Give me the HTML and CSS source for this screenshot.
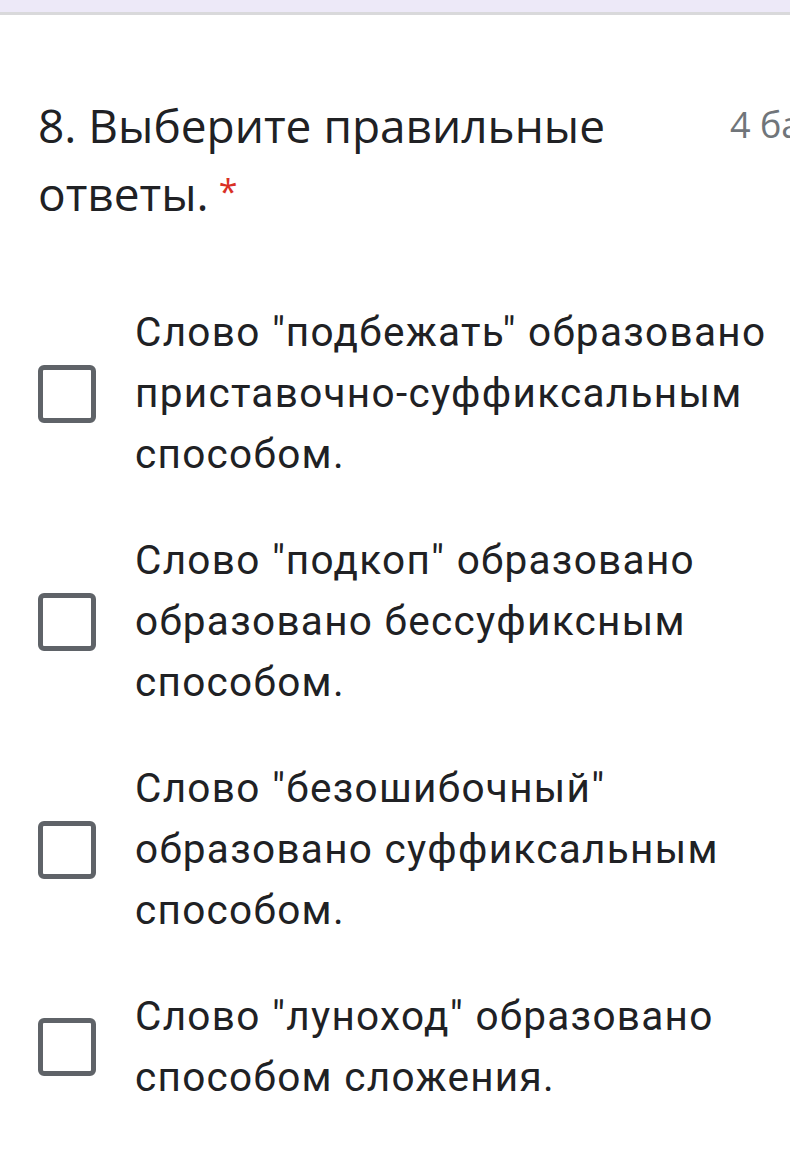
FILE: index.html
```html
<!DOCTYPE html>
<html lang="ru">
<head>
<meta charset="utf-8">
<link rel="stylesheet" href="styles.css">
</head>
<body>
<div class="topbar"></div>
<div class="question">
  <div class="q-head">
    <div class="q-title">8. Выберите правильные ответы.<span class="req">*</span></div>
    <div class="q-points">4 балла</div>
  </div>
  <div class="options">
    <div class="option">
      <span class="box"></span>
      <span class="label">Слово "подбежать" образовано приставочно-суффиксальным способом.</span>
    </div>
    <div class="option">
      <span class="box"></span>
      <span class="label">Слово "подкоп" образовано образовано бессуфиксным способом.</span>
    </div>
    <div class="option">
      <span class="box"></span>
      <span class="label">Слово "безошибочный" образовано суффиксальным способом.</span>
    </div>
    <div class="option">
      <span class="box"></span>
      <span class="label">Слово "луноход" образовано способом сложения.</span>
    </div>
  </div>
</div>
</body>
</html>
```

FILE: styles.css
```css
html, body {
  margin: 0;
  padding: 0;
  background: #ffffff;
  overflow: hidden;
}
body {
  width: 790px;
  height: 1164px;
  font-family: Roboto, "Noto Sans", sans-serif;
  color: #202124;
}
.topbar {
  height: 12px;
  background: #ede9f8;
  border-bottom: 3px solid #d9d9db;
}
.question {
  padding: 76px 0 0 38px;
}
.q-head {
  display: flex;
  align-items: flex-start;
  overflow: hidden;
}
.q-title {
  flex: none;
  width: 650px;
  font-family: "Open Sans", "Noto Sans", sans-serif;
  font-size: 46px;
  line-height: 68px;
  color: #202124;
}
.req {
  color: #d93025;
  font-size: 34px;
  vertical-align: top;
  margin-left: 10px;
  position: relative;
  top: -2px;
}
.q-points {
  flex: none;
  margin-left: 42px;
  font-family: "Open Sans", "Noto Sans", sans-serif;
  font-size: 36px;
  line-height: 68px;
  color: #70757a;
  white-space: nowrap;
}
.options {
  display: flex;
  flex-direction: column;
  gap: 45px;
  margin-top: 75px;
}
.option {
  display: flex;
  align-items: center;
}
.box {
  flex: none;
  width: 48px;
  height: 48px;
  border: 5px solid #5f6368;
  border-radius: 6px;
}
.label {
  margin-left: 39px;
  width: 650px;
  font-size: 40.5px;
  letter-spacing: 1.3px;
  line-height: 61px;
  color: #202124;
}
```
